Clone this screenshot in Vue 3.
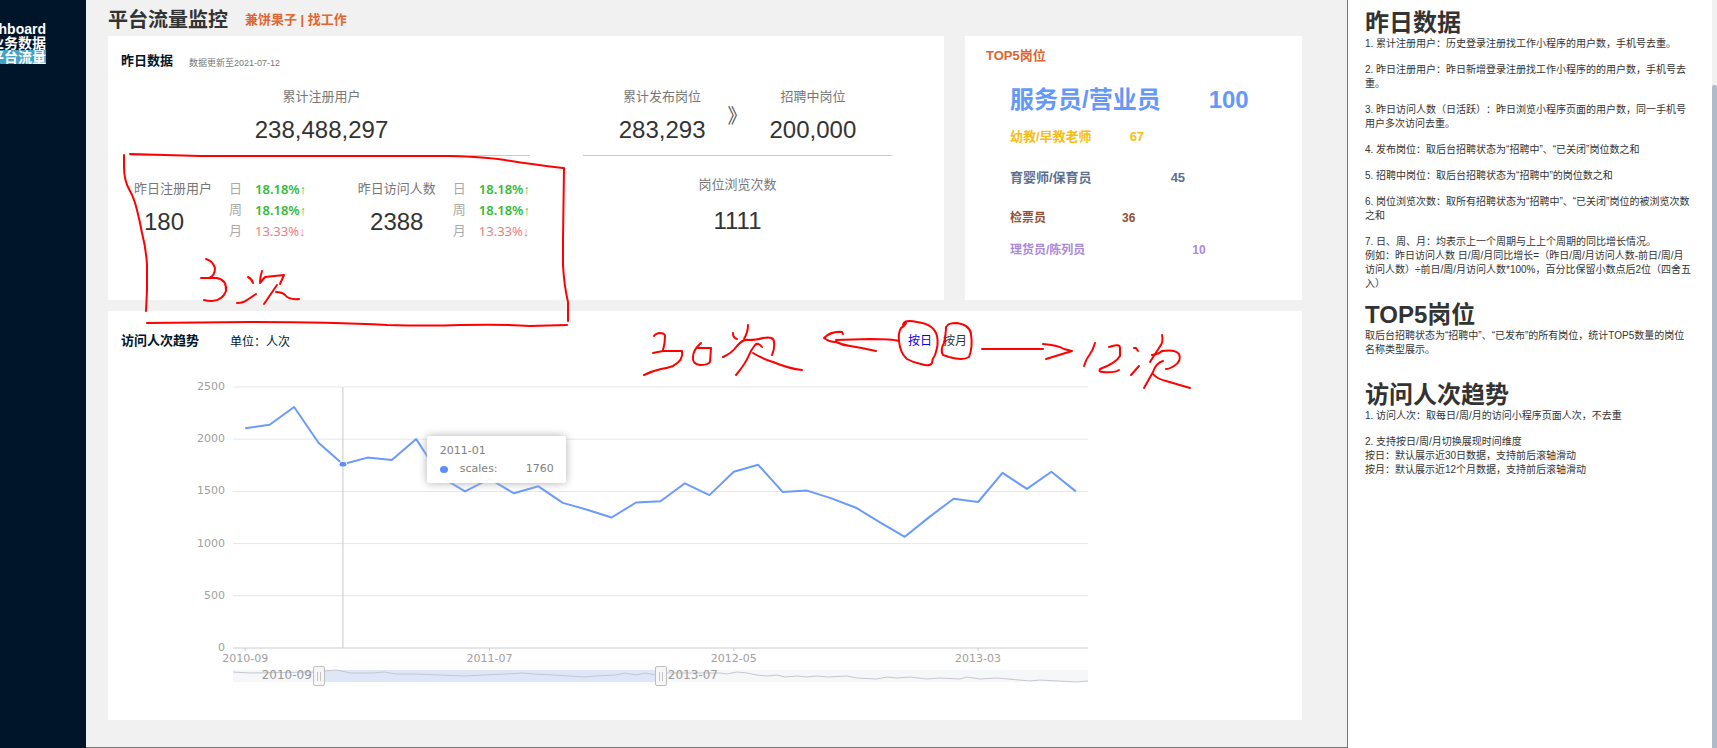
<script setup>
import { ref, computed } from 'vue'

const mode = ref('day')
const zoomStart = ref(10)
const zoomEnd = ref(50)

const navItems = [
  { label: 'Dashboard', active: false },
  { label: '业务数据', active: false },
  { label: '平台流量', active: true },
]

const periods = [
  { name: '日', value: '18.18%', up: true },
  { name: '周', value: '18.18%', up: true },
  { name: '月', value: '13.33%', up: false },
]

const visitors = [
  { label: '昨日注册用户', value: '180', short: true },
  { label: '昨日访问人数', value: '2388', short: false },
]

const topJobs = [
  { name: '服务员/营业员', count: 100, rank: 'first' },
  { name: '幼教/早教老师', count: 67, rank: 'second' },
  { name: '育婴师/保育员', count: 45, rank: 'third' },
  { name: '检票员', count: 36, rank: 'fourth' },
  { name: '理货员/陈列员', count: 10, rank: 'fifth' },
]

const scales = [
  2105, 2138, 2308, 1966, 1760, 1824, 1801, 2001, 1640, 1500, 1620, 1482,
  1549, 1390, 1325, 1250, 1394, 1406, 1578, 1465, 1689, 1755, 1495, 1508,
  1433, 1344, 1201, 1065, 1254, 1429, 1398, 1678, 1524, 1688, 1500,
]
const plot = { left: 125, right: 980, top: 17, bottom: 278 }
const step = (plot.right - plot.left) / scales.length
const px = (i) => plot.left + step * (i + 0.5)
const py = (v) => plot.bottom - (v / 2500) * (plot.bottom - plot.top)
const linePoints = computed(() =>
  scales.map((v, i) => `${px(i).toFixed(1)},${py(v).toFixed(1)}`).join(' ')
)
const yTicks = [2500, 2000, 1500, 1000, 500, 0]
const xTicks = [
  { i: 0, label: '2010-09' },
  { i: 10, label: '2011-07' },
  { i: 20, label: '2012-05' },
  { i: 30, label: '2013-03' },
]
const hovered = 4

const dayNotes = [
  ['1. 累计注册用户：历史登录注册找工作小程序的用户数，手机号去重。'],
  ['2. 昨日注册用户：昨日新增登录注册找工作小程序的的用户数，手机号去重。'],
  ['3. 昨日访问人数（日活跃）：昨日浏览小程序页面的用户数，同一手机号用户多次访问去重。'],
  ['4. 发布岗位：取后台招聘状态为“招聘中”、“已关闭”岗位数之和'],
  ['5. 招聘中岗位：取后台招聘状态为“招聘中”的岗位数之和'],
  ['6. 岗位浏览次数：取所有招聘状态为“招聘中”、“已关闭”岗位的被浏览次数之和'],
  [
    '7. 日、周、月：均表示上一个周期与上上个周期的同比增长情况。',
    '例如：昨日访问人数 日/周/月同比增长=（昨日/周/月访问人数-前日/周/月访问人数）÷前日/周/月访问人数*100%，百分比保留小数点后2位（四舍五入）',
  ],
]
const topNotes = [
  ['取后台招聘状态为“招聘中”、“已发布”的所有岗位，统计TOP5数量的岗位名称类型展示。'],
]
const trendNotes = [
  ['1. 访问人次：取每日/周/月的访问小程序页面人次，不去重'],
  [
    '2. 支持按日/周/月切换展现时间维度',
    '按日：默认展示近30日数据，支持前后滚轴滑动',
    '按月：默认展示近12个月数据，支持前后滚轴滑动',
  ],
]
const noteSections = [
  { title: '昨日数据', notes: dayNotes },
  { title: 'TOP5岗位', notes: topNotes },
  { title: '访问人次趋势', notes: trendNotes },
]

const inkStrokes = [
  // frame round the visitor figures
  'M124 155L124 167Q124 181 130 191Q134 198 137 210Q140 222 142 233Q146 248 147 265L147 290L146 311',
  'M130 154L200 156L450 156Q485 157 505 160Q530 164 563 168',
  'M564 168L563 240L563 265Q564 285 568 302L568 321',
  'M147 323L250 322Q330 322 387 325Q430 326 460 325Q505 324 530 326L567 325',
  // note below the frame
  'M206 259Q213 261 215 268Q215 276 209 278L201 278L217 278Q227 280 226 291Q223 300 212 301Q207 301 204 300',
  'M248 277Q252 279 253 283',
  'M237 303Q243 303 247 300L256 294',
  'M262 271Q260 277 260 283L265 277L284 275L280 284',
  'M277 285L264 304',
  'M276 292Q282 292 285 295Q289 300 299 299',
  // note left of the switch
  'M654 336Q655 334 659 333Q665 333 665 336Q665 344 663 350',
  'M653 353L663 351L682 351Q684 360 673 366Q668 368 661 369Q652 371 644 375',
  'M701 343Q693 350 693 357Q692 364 700 365Q708 365 710 362L711 348L698 348',
  'M733 333Q733 338 737 339',
  'M748 325Q748 332 744 339',
  'M723 357Q732 353 737 346Q743 339 748 340Q757 340 763 338Q774 336 774 342Q775 348 772 355',
  'M762 347Q758 342 755 345Q751 350 749 355Q746 363 736 375',
  'M753 353Q763 359 773 362Q790 369 802 370',
  'M843 334L842 332Q831 331 824 338Q829 342 836 342',
  'M836 340L870 339Q892 339 899 341',
  'M836 342Q842 345 850 346Q863 348 876 351',
  // circles round the switch
  'M906 323Q905 326 901 328Q898 333 899 341Q900 353 907 359Q914 363 921 364Q930 367 932 363Q932 359 935 355Q939 344 937 336Q934 324 917 322Q904 319 903 325',
  'M947 326Q948 323 957 323Q970 325 971 334Q973 347 969 357Q963 361 949 357L943 355Q940 350 944 343Q946 333 946 327',
  // note right of the switch
  'M982 349L1043 349',
  'M1043 344Q1057 345 1064 349L1072 351L1046 359',
  'M1095 343Q1093 350 1090 354Q1086 359 1084 366',
  'M1109 347Q1120 343 1120 348L1120 356Q1116 363 1100 369Q1098 372 1103 372Q1115 373 1119 370',
  'M1134 348L1136 348L1138 351',
  'M1139 366L1131 375',
  'M1162 335Q1164 342 1159 348L1155 354L1150 362',
  'M1152 355Q1159 354 1162 351Q1175 349 1179 354Q1182 361 1174 366Q1169 369 1166 369',
  'M1163 361Q1156 363 1153 372L1144 388',
  'M1153 374Q1157 379 1166 381L1190 388',
]
</script>

<template>
  <div class="shell">
    <nav class="sidebar" aria-label="主导航">
      <a
        v-for="item in navItems"
        :key="item.label"
        href="#"
        class="nav-link"
        :class="{ active: item.active }"
      ><span>{{ item.label }}</span></a>
    </nav>

    <main class="main">
      <header class="page-head">
        <h1>平台流量监控</h1>
        <p>兼饼果子 | 找工作</p>
      </header>

      <div class="cards">
        <section class="card summary">
          <div class="card-head">
            <h2>昨日数据</h2>
            <small>数据更新至2021-07-12</small>
          </div>
          <div class="stats">
            <div class="stat-col">
              <div class="stat total">
                <span class="label">累计注册用户</span>
                <span class="number">238,488,297</span>
              </div>
              <hr class="rule inset" />
              <div class="visitor-row">
                <div v-for="v in visitors" :key="v.label" class="visitor">
                  <div class="visitor-main">
                    <span class="label">{{ v.label }}</span>
                    <span class="number" :class="{ short: v.short }">{{ v.value }}</span>
                  </div>
                  <dl class="periods">
                    <template v-for="p in periods" :key="p.name">
                      <dt>{{ p.name }}</dt>
                      <dd :class="p.up ? 'up' : 'down'">{{ p.value }}<span class="arrow">{{ p.up ? '↑' : '↓' }}</span></dd>
                    </template>
                  </dl>
                </div>
              </div>
            </div>
            <div class="stat-col">
              <div class="job-row">
                <div class="stat">
                  <span class="label">累计发布岗位</span>
                  <span class="number">283,293</span>
                </div>
                <span class="chevron">》</span>
                <div class="stat">
                  <span class="label">招聘中岗位</span>
                  <span class="number">200,000</span>
                </div>
              </div>
              <hr class="rule" />
              <div class="stat views">
                <span class="label">岗位浏览次数</span>
                <span class="number">1111</span>
              </div>
            </div>
          </div>
        </section>

        <section class="card top">
          <h2>TOP5岗位</h2>
          <ol class="jobs">
            <li v-for="job in topJobs" :key="job.name" :class="job.rank">
              <span>{{ job.name }}</span><b>{{ job.count }}</b>
            </li>
          </ol>
        </section>

        <section class="card trend">
          <div class="trend-head">
            <div class="trend-title">
              <h2>访问人次趋势</h2>
              <span>单位：人次</span>
            </div>
            <div class="switch">
              <button type="button" :class="{ on: mode === 'day' }" @click="mode = 'day'">按日</button>
              <button type="button" :class="{ on: mode === 'month' }" @click="mode = 'month'">按月</button>
            </div>
          </div>

          <div class="chart">
            <svg viewBox="0 0 1194 295" role="img" aria-label="访问人次趋势图">
              <g v-for="t in yTicks" :key="t">
                <line
                  :x1="plot.left" :x2="plot.right" :y1="py(t)" :y2="py(t)"
                  :class="t === 0 ? 'axis' : 'grid'"
                />
                <text x="117" :y="py(t) + 3" text-anchor="end">{{ t }}</text>
              </g>
              <g v-for="t in xTicks" :key="t.label">
                <line :x1="px(t.i)" :x2="px(t.i)" :y1="plot.bottom" :y2="plot.bottom + 3" class="axis" />
                <text :x="px(t.i)" :y="plot.bottom + 14" text-anchor="middle">{{ t.label }}</text>
              </g>
              <line :x1="px(hovered)" :x2="px(hovered)" :y1="plot.top" :y2="plot.bottom" class="cross" />
              <polyline :points="linePoints" class="series" />
              <ellipse :cx="px(hovered)" :cy="py(scales[hovered])" rx="4" ry="3" class="dot" />
            </svg>
            <div class="tooltip">
              <div>2011-01</div>
              <div class="tooltip-row">
                <i></i><span>scales:</span><span class="tooltip-value">1760</span>
              </div>
            </div>
          </div>

          <div class="zoom">
            <div
              class="zoom-range"
              :style="{ left: zoomStart + '%', width: zoomEnd - zoomStart + '%' }"
            ></div>
            <svg viewBox="0 0 855 12" preserveAspectRatio="none" aria-hidden="true">
              <path
                d="M0 2L18 3L80 2L103 0L118 3L140 3L151 2L163 4L182 4L207 5L230 6L273 4L290 3L300 4L320 5L352 7L363 6L383 5L392 3L403 5L413 3L422 5L435 3L487 3L494 4L504 2L514 3L524 5L534 6L544 5L552 7L564 6L574 7L584 6L595 7L614 6L624 8L644 9L654 7L664 8L677 7L694 9L707 8L727 9L734 7L747 9L764 8L797 11L807 10L844 12L855 11"
              />
            </svg>
            <span class="zoom-label from" :style="{ right: 100 - zoomStart + '%' }">2010-09</span>
            <span class="zoom-label to" :style="{ left: zoomEnd + '%' }">2013-07</span>
            <input v-model.number="zoomStart" type="range" min="0" max="100" aria-label="开始时间" />
            <input v-model.number="zoomEnd" type="range" min="0" max="100" aria-label="结束时间" />
          </div>
        </section>
      </div>

      <svg class="ink" viewBox="86 0 1261 747" aria-hidden="true">
        <path v-for="(d, i) in inkStrokes" :key="i" :d="d" />
      </svg>
    </main>

    <aside class="notes">
      <div class="notes-body">
        <section v-for="s in noteSections" :key="s.title">
          <h2>{{ s.title }}</h2>
          <div v-for="(lines, i) in s.notes" :key="i" class="note">
            <p v-for="line in lines" :key="line">{{ line }}</p>
          </div>
        </section>
      </div>
      <div class="scroll-track"><div class="scroll-thumb"></div></div>
    </aside>
  </div>
</template>

<style>
body {
  margin: 0;
}
</style>

<style scoped>
.shell {
  display: grid;
  grid-template-columns: 86px minmax(0, 1fr) 369px;
  min-height: 100vh;
  box-sizing: border-box;
  font-family: "Liberation Sans", "Noto Sans CJK SC", sans-serif;
  font-size: 13px;
  text-spacing-trim: space-all;
  color: #333;
  background: #fff;
}
h1, h2, p, dl, dd, ol {
  margin: 0;
  padding: 0;
}
.sidebar {
  background: #001529;
  padding-top: 22px;
  overflow: hidden;
}
.nav-link {
  display: flex;
  justify-content: flex-end;
  width: 46px;
  font-size: 14px;
  line-height: 14px;
  font-weight: bold;
  color: #fff;
  text-decoration: none;
  white-space: nowrap;
}
.nav-link.active {
  background: #41a3c6;
}
.main {
  position: relative;
  background: #f1f1f1;
  border-right: 1px solid #777;
  border-bottom: 1px solid #777;
  padding: 4px 45px 20px 22px;
}
.page-head {
  display: flex;
  align-items: center;
  gap: 17px;
  height: 32px;
}
.page-head h1 {
  font-size: 20px;
  line-height: 30px;
}
.page-head p {
  line-height: 30px;
  font-weight: bold;
  color: #e1652f;
}
.cards {
  display: grid;
  grid-template-columns: 836fr 337fr;
  gap: 11px 21px;
}
.card {
  background: #fff;
  min-width: 0;
}
.card h2 {
  font-size: 13px;
  line-height: 20px;
}
.summary {
  min-height: 264px;
}
.card-head {
  display: flex;
  align-items: center;
  gap: 16px;
  padding: 15px 13px 0;
  color: #001529;
}
.card-head small {
  font-size: 9px;
  line-height: 20px;
  padding-top: 2px;
  margin-bottom: -2px;
  color: #777;
}
.stats {
  display: grid;
  grid-template-columns: 417fr 309fr;
  column-gap: 53px;
  padding: 16px 52px 0 5px;
}
.stat {
  display: flex;
  flex-direction: column;
  align-items: center;
}
.label {
  line-height: 20px;
  color: #777;
  white-space: nowrap;
}
.number {
  font-size: 24px;
  line-height: 28px;
  margin-top: 9px;
}
.rule {
  border: 0;
  height: 1px;
  margin: 11px 0 0;
  background: #c8c8c8;
}
.rule.inset {
  margin-left: 17px;
}
.visitor-row {
  display: flex;
  justify-content: space-between;
  padding: 23px 0 0 21px;
}
.visitor {
  display: flex;
  gap: 17px;
}
.visitor-main {
  display: flex;
  flex-direction: column;
  align-items: center;
}
.number.short {
  padding-right: 18px;
}
.periods {
  display: grid;
  grid-template-columns: 13px auto;
  column-gap: 13px;
  line-height: 20px;
}
.periods dt {
  color: #aaa;
}
.periods dd {
  font-family: "Noto Sans", sans-serif;
}
.arrow {
  font-family: "Liberation Sans", sans-serif;
}
.periods .up {
  color: #36b936;
  font-weight: 600;
}
.periods .down {
  color: #f07c7c;
}
.job-row {
  display: grid;
  grid-template-columns: auto 20px auto;
  justify-content: center;
  align-items: center;
  column-gap: 22px;
}
.chevron {
  font-size: 20px;
  line-height: 24px;
  color: #555;
}
.views {
  padding-top: 19px;
}
.views .number {
  margin-top: 12px;
}
.top {
  padding: 10px 21px 0;
}
.top h2 {
  color: #e1652f;
}
.jobs {
  list-style: none;
  padding: 18px 0 0 24px;
}
.jobs li {
  display: flex;
  line-height: 20px;
  font-weight: bold;
  white-space: nowrap;
}
.jobs .first {
  font-size: 24px;
  line-height: 32px;
  gap: 48px;
  color: #6498f9;
}
.jobs .second {
  margin-top: 11px;
  gap: 38px;
  color: #f6bd16;
}
.jobs .third {
  margin-top: 21px;
  gap: 79px;
  color: #5d7092;
}
.jobs .fourth {
  margin-top: 20px;
  font-size: 12px;
  gap: 76px;
  color: #945035;
}
.jobs .fifth {
  margin-top: 12px;
  font-size: 12px;
  gap: 107px;
  color: #aa8ad8;
}
.trend {
  grid-column: 1 / -1;
  padding-bottom: 38px;
}
.trend-head {
  display: grid;
  grid-template-columns: 67% auto;
  align-items: center;
  height: 59px;
}
.trend-title {
  display: flex;
  align-items: center;
  gap: 31px;
  padding-left: 13px;
  color: #001529;
}
.trend-title span {
  font-size: 12px;
}
.switch {
  display: flex;
  gap: 11px;
}
.switch button {
  border: 0;
  padding: 0;
  background: none;
  font: inherit;
  font-size: 12px;
  line-height: 20px;
  color: #333;
  cursor: pointer;
}
.switch button.on {
  color: #0000f0;
}
.chart {
  position: relative;
}
.chart svg {
  display: block;
  width: 100%;
}
.chart text {
  font-family: "DejaVu Sans", sans-serif;
  font-size: 11px;
  fill: #a0a0a0;
}
.grid {
  stroke: #e6e6e6;
  stroke-width: 1;
}
.axis {
  stroke: #ccc;
  stroke-width: 1;
}
.cross {
  stroke: #c8c8c8;
  stroke-width: 1;
}
.series {
  fill: none;
  stroke: #6a9bfa;
  stroke-width: 2;
  stroke-linejoin: round;
}
.dot {
  fill: #5b8ff9;
  stroke: #fff;
  stroke-width: 1;
}
.tooltip {
  position: absolute;
  left: 26.7%;
  top: 22.4%;
  box-sizing: border-box;
  width: 139px;
  padding: 6px 12px 5px 13px;
  border-radius: 3px;
  background: rgba(255, 255, 255, 0.95);
  box-shadow: 0 0 8px #aeaeae;
  font-family: "DejaVu Sans", sans-serif;
  font-size: 11px;
  line-height: 18px;
  color: #808080;
}
.tooltip-row {
  display: flex;
  align-items: center;
}
.tooltip-row i {
  width: 8px;
  height: 7px;
  margin-right: 12px;
  border-radius: 50%;
  background: #5b8ff9;
}
.tooltip-value {
  margin-left: auto;
}
.zoom {
  position: relative;
  width: 71.6%;
  height: 12px;
  margin: 5px 0 0 10.5%;
  background: #f5f7f9;
}
.zoom-range {
  position: absolute;
  top: 0;
  bottom: 0;
  background: #dfe6f8;
}
.zoom svg {
  position: absolute;
  inset: 0;
  width: 100%;
  height: 100%;
  overflow: visible;
}
.zoom path {
  fill: none;
  stroke: #c3c8d0;
  stroke-width: 1;
}
.zoom-label {
  position: absolute;
  top: -2px;
  font-family: "DejaVu Sans", sans-serif;
  font-size: 12px;
  line-height: 14px;
  color: #999;
}
.zoom-label.from {
  margin-right: 7px;
}
.zoom-label.to {
  margin-left: 7px;
}
.zoom input {
  position: absolute;
  left: -6px;
  top: -4px;
  width: calc(100% + 12px);
  height: 20px;
  margin: 0;
  background: none;
  appearance: none;
  pointer-events: none;
}
.zoom input::-webkit-slider-thumb {
  appearance: none;
  box-sizing: border-box;
  width: 12px;
  height: 20px;
  border: 1px solid #bfbfbf;
  border-radius: 2px;
  background:
    linear-gradient(90deg, #c4c4c4 1px, transparent 1px 3px, #c4c4c4 3px) center / 4px 9px no-repeat,
    #f6f6f6;
  pointer-events: auto;
  cursor: ew-resize;
}
.ink {
  position: absolute;
  left: 0;
  top: 0;
  width: 100%;
  pointer-events: none;
}
.ink path {
  fill: none;
  stroke: #f00;
  stroke-width: 2;
  stroke-linecap: round;
  stroke-linejoin: round;
}
.notes {
  display: flex;
}
.notes-body {
  flex: 1;
  padding: 9px 20px 8px 17px;
}
.notes-body section + section {
  margin-top: 10px;
}
.notes-body section:last-child {
  margin-top: 24px;
}
.notes-body h2 {
  font-size: 24px;
  line-height: 28px;
}
.note + .note {
  margin-top: 12px;
}
.note p {
  font-size: 10px;
  line-height: 14px;
}
.scroll-track {
  width: 5px;
  padding-top: 85px;
  box-sizing: border-box;
  display: flex;
  background: #f1f1f1;
}
.scroll-thumb {
  flex: 1;
  border-radius: 2px 2px 0 0;
  background: #b3bac7;
}
</style>
